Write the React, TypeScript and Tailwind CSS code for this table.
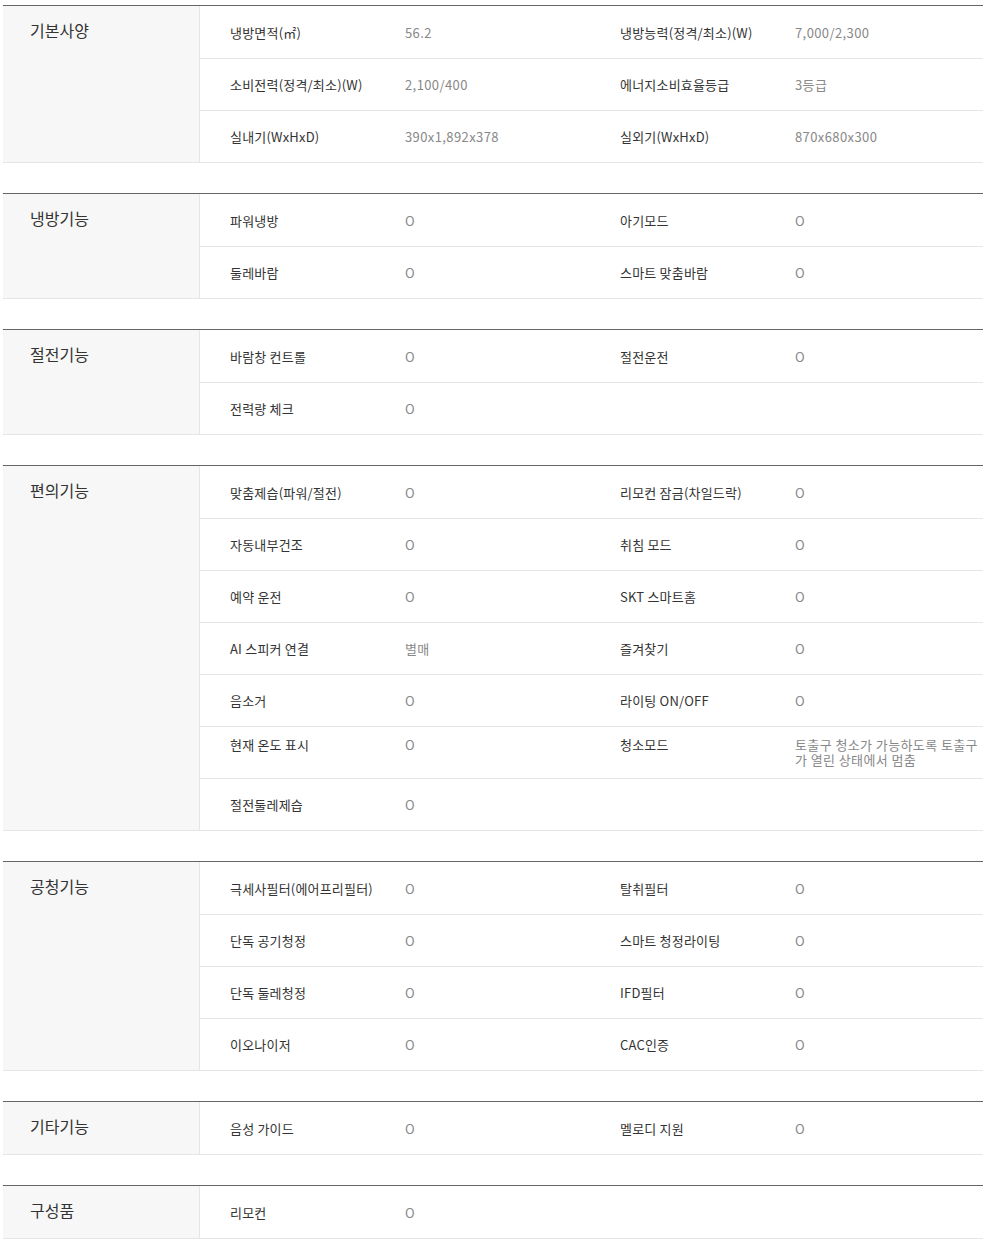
import React from 'react';

type Item = { label: string; value: string };
type Section = { title: string; rows: [Item, Item | null][]; tallRow?: number };

const SPEC: Section[] = [
  {
    title: '기본사양',
    rows: [
      [{ label: '냉방면적(㎡)', value: '56.2' }, { label: '냉방능력(정격/최소)(W)', value: '7,000/2,300' }],
      [{ label: '소비전력(정격/최소)(W)', value: '2,100/400' }, { label: '에너지소비효율등급', value: '3등급' }],
      [{ label: '실내기(WxHxD)', value: '390x1,892x378' }, { label: '실외기(WxHxD)', value: '870x680x300' }],
    ],
  },
  {
    title: '냉방기능',
    rows: [
      [{ label: '파워냉방', value: 'O' }, { label: '아기모드', value: 'O' }],
      [{ label: '둘레바람', value: 'O' }, { label: '스마트 맞춤바람', value: 'O' }],
    ],
  },
  {
    title: '절전기능',
    rows: [
      [{ label: '바람창 컨트롤', value: 'O' }, { label: '절전운전', value: 'O' }],
      [{ label: '전력량 체크', value: 'O' }, null],
    ],
  },
  {
    title: '편의기능',
    tallRow: 5,
    rows: [
      [{ label: '맞춤제습(파워/절전)', value: 'O' }, { label: '리모컨 잠금(차일드락)', value: 'O' }],
      [{ label: '자동내부건조', value: 'O' }, { label: '취침 모드', value: 'O' }],
      [{ label: '예약 운전', value: 'O' }, { label: 'SKT 스마트홈', value: 'O' }],
      [{ label: 'AI 스피커 연결', value: '별매' }, { label: '즐겨찾기', value: 'O' }],
      [{ label: '음소거', value: 'O' }, { label: '라이팅 ON/OFF', value: 'O' }],
      [{ label: '현재 온도 표시', value: 'O' }, { label: '청소모드', value: '토출구 청소가 가능하도록 토출구가 열린 상태에서 멈춤' }],
      [{ label: '절전둘레제습', value: 'O' }, null],
    ],
  },
  {
    title: '공청기능',
    rows: [
      [{ label: '극세사필터(에어프리필터)', value: 'O' }, { label: '탈취필터', value: 'O' }],
      [{ label: '단독 공기청정', value: 'O' }, { label: '스마트 청정라이팅', value: 'O' }],
      [{ label: '단독 둘레청정', value: 'O' }, { label: 'IFD필터', value: 'O' }],
      [{ label: '이오나이저', value: 'O' }, { label: 'CAC인증', value: 'O' }],
    ],
  },
  {
    title: '기타기능',
    rows: [[{ label: '음성 가이드', value: 'O' }, { label: '멜로디 지원', value: 'O' }]],
  },
  {
    title: '구성품',
    rows: [[{ label: '리모컨', value: 'O' }, null]],
  },
];

const font = { fontFamily: '"Noto Sans CJK KR", "Noto Sans", sans-serif' };

function Cells({ item }: { item: Item | null }) {
  return (
    <>
      <div className="w-[190px] pl-[30px] text-[13px] leading-[15px] text-[#333] tracking-[0.2px]">
        {item?.label}
      </div>
      <div className="flex-1 pl-[15px] pr-[4px] text-[13px] leading-[15px] text-[#888] tracking-[0.4px]">
        {item?.value}
      </div>
    </>
  );
}

function SpecTable({ section }: { section: Section }) {
  return (
    <div className="grid grid-cols-[197px_1fr] border-t border-[#666] border-b border-b-[#e5e5e5]">
      <div className="bg-[#f7f7f7] border-r border-[#e5e5e5] pl-[27px] pt-[14px] text-[16px] leading-[20px] text-[#333]">
        {section.title}
      </div>
      <div className="flex flex-col">
        {section.rows.map(([a, b], i) => {
          // rows after the first carry a top rule so the lines land where the original's do
          const tall = section.tallRow === i;
          return (
            <div
              key={i}
              className={`flex h-[52px] ${tall ? 'items-start pt-[10px]' : 'items-center'} ${
                i > 0 ? 'border-t border-[#e5e5e5]' : ''
              }`}
            >
              <div className="flex w-[390px]">
                <Cells item={a} />
              </div>
              <div className="flex flex-1">
                <Cells item={b} />
              </div>
            </div>
          );
        })}
      </div>
    </div>
  );
}

export default function App() {
  return (
    <div className="w-[989px] min-h-[1243px] bg-white" style={font}>
      <div className="ml-[3px] w-[980px] pt-[5px] flex flex-col gap-[30px]">
        {SPEC.map((s) => (
          <SpecTable key={s.title} section={s} />
        ))}
      </div>
    </div>
  );
}
